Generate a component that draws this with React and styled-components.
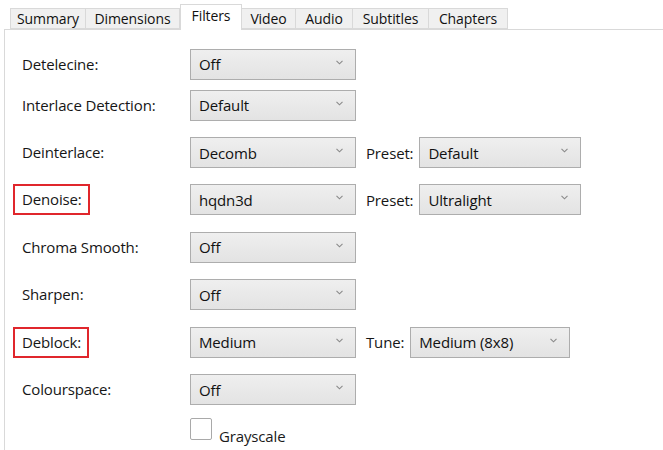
import React from "react";
import styled, { createGlobalStyle } from "styled-components";

const Global = createGlobalStyle`
  html, body { margin: 0; padding: 0; background: #fff; }
  body { font-family: "Open Sans", "Noto Sans", sans-serif; color: #1a1a1a; }
`;

const Page = styled.div`
  width: 663px;
  height: 450px;
  overflow: hidden;
  padding-left: 4px;
  box-sizing: border-box;
`;

const TabStrip = styled.div`
  display: flex;
  align-items: flex-end;
  height: 29px;
  padding-left: 6px;
  position: relative;
  z-index: 1;
`;

const Tab = styled.div`
  box-sizing: border-box;
  width: ${(p) => p.$w}px;
  height: ${(p) => (p.$active ? 26 : 21)}px;
  margin-bottom: ${(p) => (p.$active ? -1 : 0)}px;
  display: flex;
  align-items: center;
  justify-content: center;
  font-size: 14px;
  letter-spacing: -0.1px;
  color: #111;
  background: ${(p) => (p.$active ? "#fff" : "#f0f0f0")};
  border: 1px solid #d9d9d9;
  border-bottom: ${(p) => (p.$active ? "none" : "1px solid #d9d9d9")};
  margin-left: ${(p) => (p.$first || p.$active ? 0 : -1)}px;
  padding-bottom: ${(p) => (p.$active ? 4 : 0)}px;
`;

const Panel = styled.div`
  border-top: 1px solid #d9d9d9;
  border-left: 1px solid #d9d9d9;
  height: 421px;
  box-sizing: border-box;
  padding: 17px 0 0 8px;
  display: flex;
  flex-direction: column;
`;

const Row = styled.div`
  display: flex;
  align-items: center;
  height: ${(p) => p.$h}px;
`;

const LabelCell = styled.div`
  width: 177px;
  flex-shrink: 0;
  display: flex;
  align-items: center;
`;

const Label = styled.span`
  font-size: 15px;
  letter-spacing: -0.15px;
  color: #161616;
  padding: 3px 6px 4px 7px;
  border: 2px solid ${(p) => (p.$marked ? "#e0262c" : "transparent")};
`;

const Select = styled.div`
  box-sizing: border-box;
  width: ${(p) => p.$w}px;
  height: 31px;
  display: flex;
  align-items: center;
  justify-content: space-between;
  padding: 0 12px 0 8px;
  background: linear-gradient(#efefef, #e3e3e3);
  border: 1px solid #adadad;
  font-size: 15px;
  letter-spacing: -0.15px;
  color: #111;
`;

const Chevron = styled.svg`
  width: 7px;
  height: 5px;
  margin-top: -4px;
`;

const SideLabel = styled.span`
  font-size: 15px;
  letter-spacing: -0.15px;
  margin: 0 6px 0 10px;
  color: #161616;
`;

const CheckRow = styled.div`
  display: flex;
  align-items: flex-end;
  padding-left: 177px;
  margin-top: 5px;
`;

const Box = styled.div`
  width: 22px;
  height: 22px;
  box-sizing: border-box;
  border: 1px solid #a9a9a9;
  border-radius: 2px;
  background: #fff;
`;

const CheckText = styled.span`
  font-size: 15px;
  letter-spacing: -0.15px;
  margin-left: 7px;
  margin-bottom: -6px;
`;

const Dropdown = ({ w, children }) => (
  <Select $w={w}>
    <span>{children}</span>
    <Chevron viewBox="0 0 7 5">
      <path d="M0.5 0.8 L3.5 3.8 L6.5 0.8" fill="none" stroke="#8a8a8a" strokeWidth="1.1" />
    </Chevron>
  </Select>
);

const tabs = [
  ["Summary", 76],
  ["Dimensions", 95],
  ["Filters", 62],
  ["Video", 55],
  ["Audio", 58],
  ["Subtitles", 77],
  ["Chapters", 80],
];

const rows = [
  { label: "Detelecine:", value: "Off", h: 34 },
  { label: "Interlace Detection:", value: "Default", h: 48 },
  { label: "Deinterlace:", value: "Decomb", h: 47, side: ["Preset:", "Default", 162] },
  { label: "Denoise:", value: "hqdn3d", h: 47, marked: true, side: ["Preset:", "Ultralight", 162] },
  { label: "Chroma Smooth:", value: "Off", h: 48 },
  { label: "Sharpen:", value: "Off", h: 47 },
  { label: "Deblock:", value: "Medium", h: 48, marked: true, side: ["Tune:", "Medium (8x8)", 160] },
  { label: "Colourspace:", value: "Off", h: 47 },
];

export default function App() {
  return (
    <Page>
      <Global />
      <TabStrip>
        {tabs.map(([t, w], i) => (
          <Tab key={t} $w={w} $first={i === 0} $active={t === "Filters"}>
            {t}
          </Tab>
        ))}
      </TabStrip>
      <Panel>
        {rows.map((r) => (
          <Row key={r.label} $h={r.h}>
            <LabelCell>
              <Label $marked={r.marked}>{r.label}</Label>
            </LabelCell>
            <Dropdown w={166}>{r.value}</Dropdown>
            {r.side && (
              <>
                <SideLabel>{r.side[0]}</SideLabel>
                <Dropdown w={r.side[2]}>{r.side[1]}</Dropdown>
              </>
            )}
          </Row>
        ))}
        <CheckRow>
          <Box />
          <CheckText>Grayscale</CheckText>
        </CheckRow>
      </Panel>
    </Page>
  );
}
